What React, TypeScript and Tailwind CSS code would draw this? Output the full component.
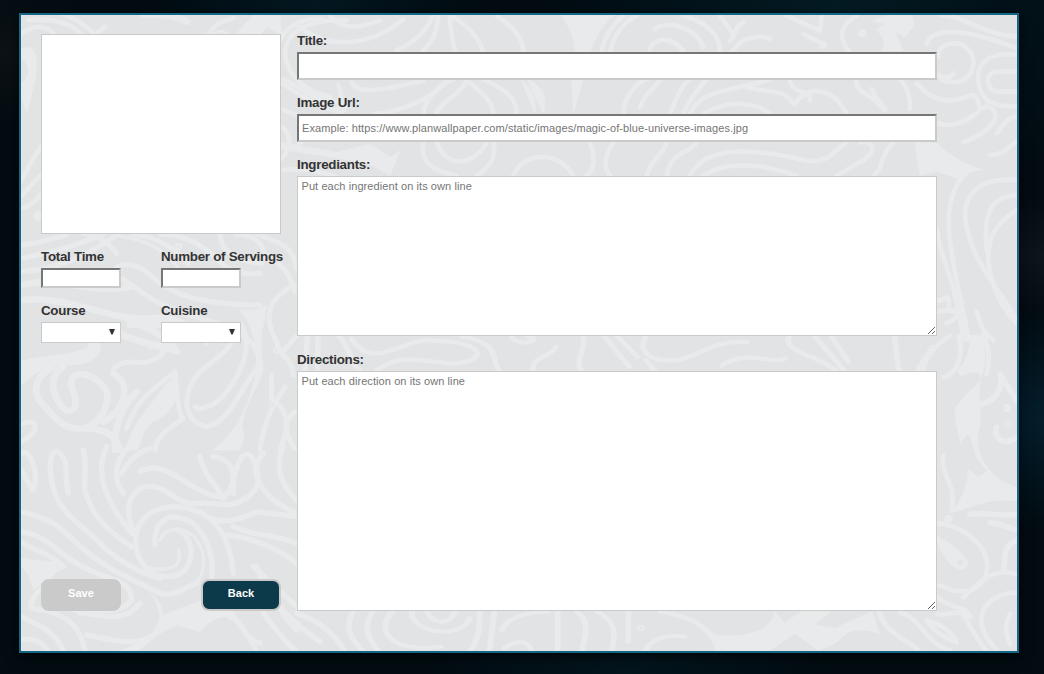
import type { ReactNode } from "react";

const label = "block h-[18px] pt-px text-[13.33px] leading-[18px] font-bold tracking-[-0.26px] text-[#333]";
const inset =
  "block rounded-none border-2 border-t-[#767676] border-l-[#767676] border-r-[#cacaca] border-b-[#cacaca] bg-white outline-none";
const area =
  "block resize rounded-none border border-[#cacaca] bg-white py-[3px] pr-1 pl-[3.5px] text-[11px] leading-[13px] tracking-[0.08px] outline-none placeholder:text-[#757575]";

function Swirls() {
  return (
    <svg className="pointer-events-none absolute inset-0 h-full w-full" viewBox="21 15 996 636" aria-hidden="true">
      <g fill="none" stroke="#e9eaec" strokeLinecap="round" strokeLinejoin="round">
        {/* upper left */}
        <g transform="scale(.33333)" strokeWidth="14">
          <path d="M60 105C100 70 140 75 165 105M85 60C170 55 220 70 250 110" />
          <path d="M185 40C230 60 260 75 285 105L315 80" />
          <path d="M430 45C510 40 540 55 562 65" strokeWidth="20" />
          <path d="M625 105C640 75 660 65 700 55" />
          <path d="M640 105C655 90 670 90 685 105" strokeWidth="8" />
          <path d="M710 100L760 45L840 40L845 105L800 80L780 105Z" fill="#e9eaec" strokeWidth="2" />
          <path d="M65 145C110 130 115 180 105 240C95 280 90 310 80 338L62 290L62 250C90 240 95 190 62 175Z" fill="#e9eaec" strokeWidth="2" />
          <path d="M62 545C85 500 105 465 124 440M62 590C90 560 105 540 124 525M62 625C90 620 110 600 124 580" />
          <circle cx="118" cy="648" r="9" fill="#e9eaec" />
          <path d="M1040 60C920 60 860 90 855 160C855 220 920 280 990 290M845 250C900 280 940 320 1010 330C1030 310 1025 280 1015 255" />
          <path d="M850 330C920 350 950 400 885 440M845 380C870 400 880 440 845 475M850 510C930 500 980 520 1044 545" />
        </g>
        {/* left, around the small fields */}
        <g transform="translate(0 225) scale(.33333)" strokeWidth="15">
          <path d="M62 60C120 55 160 40 200 30M62 100C170 80 230 60 310 28M62 140C190 130 280 80 350 30" />
          <path d="M250 25C300 35 330 55 350 85" />
          <path d="M345 30C440 45 490 70 535 130" strokeWidth="10" />
          <path d="M400 28C470 35 520 65 565 115M480 28C560 30 610 60 660 110C690 140 720 150 780 145" />
          <path d="M660 28C660 75 710 110 785 115M710 28C760 30 790 55 795 95M770 28C840 50 880 65 890 130" />
          <path d="M720 255C750 262 790 250 800 240L790 300C780 330 780 380 790 430C780 480 740 520 725 600C735 640 730 660 715 675H640C700 630 740 560 765 460C780 380 760 300 720 255Z" fill="#e9eaec" strokeWidth="3" />
          <path d="M62 410C140 385 200 400 270 365L300 345C310 390 280 420 200 420C140 420 110 440 62 480Z" fill="#e9eaec" strokeWidth="3" />
          <path d="M340 140C350 110 410 110 450 150C510 210 610 240 780 240" />
          <path d="M360 160C410 180 430 230 600 280C710 310 770 340 780 410" />
          <path d="M62 180C180 150 270 210 390 185M62 225C210 210 330 290 450 280C540 270 570 310 620 350C580 310 480 290 390 300" strokeWidth="20" />
          <path d="M380 280C440 310 500 330 530 380C480 355 430 360 370 330C320 300 280 340 270 370" strokeWidth="20" />
          <path d="M340 430C390 390 420 430 470 400C510 380 480 360 450 365" />
          <path d="M190 425C150 450 150 500 185 545C210 570 240 555 220 500C190 430 280 430 320 500C330 540 300 600 250 610C190 620 160 570 130 540C90 500 110 450 155 430" strokeWidth="20" />
          <path d="M62 600C110 570 130 620 62 650" />
          <path d="M250 610C330 610 350 640 360 675M340 445C400 480 370 560 310 590M410 500C360 550 340 620 345 675" strokeWidth="20" />
          <path d="M525 440C455 500 410 520 380 610M550 580C490 620 470 640 465 675M525 440C530 490 530 540 545 580" />
          <path d="M530 445C545 520 510 570 460 590C420 620 430 650 410 675H380C390 600 440 560 480 500Z" fill="#e9eaec" strokeWidth="2" />
          <path d="M720 300C700 370 650 400 600 440C540 510 550 590 620 605C690 590 710 510 770 430M725 300C755 350 735 430 680 500C650 540 605 560 585 545" />
          <path d="M800 90C850 120 870 150 885 200M885 180C800 220 790 280 830 350C840 400 880 400 880 450M815 450V520M855 485C820 540 790 590 780 675" />
          <path d="M815 520C880 570 860 620 840 675M885 560C850 590 850 620 885 670" />
          <circle cx="535" cy="65" r="4" /><circle cx="829" cy="377" r="3" />
          <circle cx="817" cy="540" r="7" strokeWidth="5" fill="#e2e3e4" />
        </g>
        {/* lower left */}
        <g transform="translate(0 450) scale(.33333)" strokeWidth="16">
          <path d="M62 10C85 -10 120 60 100 120C80 100 75 70 62 60M205 130C190 70 210 40 180 10C150 -15 140 60 165 130C190 200 260 235 310 290C360 335 410 365 480 385" />
          <path d="M250 0C270 80 230 100 280 180C310 235 360 265 395 290M320 -10C280 70 320 160 395 250" />
          <path d="M385 -10C340 40 340 90 370 130M365 70C385 30 420 5 450 -5" />
          <path d="M405 250C360 170 400 100 460 110C520 120 530 170 600 160C650 155 690 180 735 145" />
          <path d="M420 65C490 30 530 90 620 130C710 170 690 80 720 30C740 0 760 10 770 60C785 100 760 130 740 145" />
          <path d="M600 20C610 75 650 105 670 145M640 20C710 30 700 80 700 130" />
          <path d="M410 300C390 200 480 155 560 175C650 190 690 270 700 370M410 300C430 380 510 400 555 360C590 310 570 260 535 240" />
          <path d="M465 285C460 220 500 190 545 205C610 220 645 310 635 390" />
          <path d="M480 270C500 225 560 230 590 270C625 320 610 370 590 400M535 300C550 350 510 370 430 350" strokeWidth="10" />
          <path d="M62 185C130 200 170 220 220 270C300 350 400 390 460 420C510 450 540 420 590 400" />
          <path d="M62 245C150 260 160 300 230 340C330 400 390 380 395 450C360 500 290 470 240 490" />
          <path d="M62 275C120 310 150 310 190 350M62 330C140 350 150 330 180 352C130 380 150 400 110 430C80 470 90 480 130 480C210 500 240 530 255 605" />
          <path d="M62 335C90 330 120 345 180 352C140 370 130 400 100 420C90 380 80 360 62 350Z" fill="#e9eaec" strokeWidth="2" />
          <path d="M130 430C210 470 210 490 330 500C390 500 400 480 420 460M62 500C130 530 170 550 190 605M62 570C100 560 130 580 145 605" />
          <path d="M450 430C480 450 490 480 488 498C540 470 600 460 650 432C690 450 700 480 690 500C650 495 620 520 600 545L530 525L480 550L410 605H350C400 590 440 570 460 545L480 510C480 480 470 450 450 430Z" fill="#e9eaec" strokeWidth="3" />
          <path d="M260 555C340 570 410 590 450 560M660 440C700 510 750 550 770 605M690 500C740 520 720 560 780 580" />
          <path d="M770 350C800 430 850 500 960 575M680 255C740 260 830 290 890 340M760 350L890 470M830 400C820 460 850 500 890 540M700 230C760 260 820 250 890 280" />
          <path d="M600 185C650 230 720 210 770 185L890 200M790 10C730 70 800 150 880 185M850 -10C820 60 850 110 890 150" />
          <path d="M890 490C960 510 1010 560 1035 605M790 490C820 530 850 570 890 605" />
        </g>
        {/* top centre */}
        <g transform="translate(280 14) scale(.33333)" strokeWidth="14">
          <path d="M50 30C120 100 260 110 370 15M150 5C180 40 220 50 300 20M0 80C20 30 80 10 130 15" />
          <path d="M350 110C410 80 440 50 460 5M430 110C470 70 470 40 475 5M510 5C510 50 520 80 525 115M510 5C560 30 600 75 610 115" />
          <path d="M650 5C700 40 730 70 730 115M0 195C60 205 80 260 160 260C200 270 210 290 160 305M215 205C230 250 340 220 430 200" />
          <path d="M280 300C380 290 460 250 500 200M430 300C430 260 480 210 520 195M470 300C470 270 540 245 560 200C600 230 640 260 640 300M610 195C680 230 710 250 710 300" />
          <path d="M845 5C870 40 885 80 885 115H930C945 70 970 30 1000 5Z" fill="#e9eaec" strokeWidth="2" />
          <path d="M720 195C760 220 770 270 765 300M740 195C800 220 800 260 790 300M875 195L880 300L910 195Z" fill="#e9eaec" strokeWidth="2" />
          <path d="M965 115C970 70 1000 30 1030 5M990 115C1000 70 1020 30 1070 5M1030 300C1030 260 1060 210 1100 195" />
          <path d="M0 385L170 415L270 390L330 430L360 410L330 485L280 455L220 440L0 405Z" fill="#e9eaec" strokeWidth="2" />
          <path d="M430 385C420 450 460 470 530 485M470 385C500 470 590 450 620 385M640 385C650 430 630 460 590 485M700 485C730 410 840 410 880 485M930 385C950 440 940 470 920 485M1000 385C970 430 970 460 990 485" />
        </g>
        {/* top right */}
        <g transform="translate(640 14) scale(.33333)" strokeWidth="14">
          <path d="M45 45C90 15 170 45 190 100M30 105C45 65 100 70 130 110M130 5C200 25 240 60 240 115M270 80C290 60 270 50 240 5M310 25C280 40 290 60 275 75M275 115C310 60 370 65 390 75M440 5L540 50L545 5M490 60L550 90" />
          <path d="M650 5C590 40 600 80 630 115" />
          <path d="M700 20L735 5H820C800 30 815 50 800 65L765 55L790 110H725C745 80 725 70 710 45L735 30Z" fill="#e9eaec" strokeWidth="3" />
          <circle cx="667" cy="57" r="5" /><circle cx="548" cy="93" r="5" />
          <path d="M0 280C10 240 60 210 60 195M90 300C110 250 120 220 150 195M130 300C150 250 180 220 200 195M150 300C180 220 300 230 390 195M190 300C270 250 360 270 390 300" />
          <path d="M320 220C390 240 430 220 460 270M450 195C450 240 520 230 510 260M465 270C500 210 580 220 620 300M650 195C640 240 690 230 735 290M695 225C710 260 730 270 735 290M780 195C810 230 810 260 810 285" />
          <path d="M20 485C30 440 80 410 80 385M80 485C90 410 150 420 170 385M150 485C190 410 290 390 500 440C570 450 590 400 620 385M190 485C270 430 400 460 470 485M660 385C720 380 700 430 650 450L590 485M760 385C710 440 740 450 700 485" />
        </g>
        <g transform="translate(900 0) scale(.33333)" strokeWidth="14">
          <path d="M30 55C50 90 10 80 12 105M120 45C190 45 250 105 350 110M80 130C100 80 200 85 350 145" />
          <path d="M115 170C110 120 210 110 220 180C225 230 180 260 125 240M115 225C130 240 160 230 160 220M350 165C280 155 230 180 235 240C240 300 270 320 350 320M350 215H290C250 220 260 270 290 275H350" />
          <path d="M50 250C100 310 160 310 215 285C250 290 220 340 260 320C310 330 290 390 190 427M115 370C160 385 210 360 240 330M350 350C320 350 310 380 290 400M350 425C320 445 310 465 270 465" />
          <path d="M45 425L110 430C150 470 200 495 250 510C210 510 190 530 190 540L110 515L60 525Z" fill="#e9eaec" strokeWidth="2" />
          <path d="M190 525C100 640 170 800 205 1020M350 540C230 530 180 590 200 680C220 790 300 870 350 960M350 585C270 590 250 640 260 750M350 630C290 670 260 710 265 790C275 850 300 920 350 970" />
          <path d="M112 690C120 780 150 800 165 890C180 940 185 980 190 1020M112 900C140 910 150 860 145 930M112 935C180 920 190 950 140 970M230 935C240 970 250 1000 280 1020" />
        </g>
        {/* lower right */}
        <g transform="translate(900 334) scale(.33333)" strokeWidth="14">
          <path d="M70 105C80 60 110 30 150 5M175 5C195 60 170 120 130 130M250 0C270 50 270 80 260 120" />
          <path d="M210 5H250C250 40 265 90 240 130C245 110 215 110 200 120C180 135 160 110 190 90C205 60 215 30 210 5Z" fill="#e9eaec" strokeWidth="3" />
          <path d="M240 140C220 170 180 190 165 230C165 270 180 300 182 330C195 300 210 290 215 320C225 350 225 380 265 410L235 430L205 405C205 430 195 490 155 535C220 520 260 490 350 500V460C270 440 220 360 235 290C250 230 230 210 240 140Z" fill="#e9eaec" strokeWidth="3" />
          <path d="M245 210C290 200 310 160 300 120L350 200M350 310C310 340 280 310 290 280" strokeWidth="17" />
          <circle cx="321" cy="222" r="5" /><circle cx="324" cy="270" r="3" />
          <path d="M130 365C120 430 170 440 155 530M112 568C170 570 250 620 260 680C270 730 230 780 180 770C160 780 130 750 112 755" />
          <path d="M230 500C220 450 270 450 300 450M210 540C280 535 310 550 350 540M270 565C320 570 330 590 350 585M350 620C300 640 320 680 310 710" strokeWidth="17" />
          <path d="M112 610C160 630 210 680 200 695C170 725 130 670 112 620Z" fill="#e9eaec" strokeWidth="5" />
          <circle cx="180" cy="686" r="9" fill="#e2e3e4" strokeWidth="2" />
          <circle cx="145" cy="555" r="6" fill="#e2e3e4" />
          <path d="M190 790C240 740 280 700 350 720M350 775C260 780 220 840 260 910L290 950M330 840C310 880 320 900 330 930M112 790C140 820 210 820 210 850C170 820 140 850 112 840M0 835C60 850 80 930 150 950M80 860C130 870 160 900 170 925C130 910 100 890 80 860M180 830C210 870 230 920 260 950" />
        </g>
        {/* band between the text areas */}
        <g transform="translate(280 332) scale(.42092 .33333)" strokeWidth="13">
          <path d="M0 60C20 50 30 20 40 12M65 15L60 115M90 15V115M140 12C180 70 160 90 190 115M170 20C220 120 290 20 360 25C500 30 490 90 410 95C340 90 290 60 230 115M430 12C530 35 500 85 520 115M550 15C570 50 630 20 590 12M655 45C640 80 600 70 600 115" />
          <path d="M720 12C730 50 700 80 715 115M770 12L830 105M800 12L850 75M870 12C850 50 870 90 940 85C1010 70 1020 25 1110 30M870 85L890 115M1050 100C1110 50 1170 100 1200 80M1210 12C1190 60 1280 70 1320 115M1270 12L1340 115M1310 12L1350 90M1460 15L1470 115M1550 45L1515 115" />
        </g>
        {/* bottom edge */}
        <g transform="translate(280 560) scale(.48724 .33333)" strokeWidth="12">
          <path d="M150 155C130 210 150 240 170 272M190 155C170 200 180 230 200 272M230 155C190 220 240 280 330 260M270 155C270 220 370 240 390 175M300 155C320 200 350 190 360 155M390 272C410 240 410 190 410 155M430 272L440 155M455 210C470 170 510 155 550 155M460 265C480 240 510 240 515 270" />
          <path d="M570 155V272M610 155C640 190 625 230 620 272M650 155C690 180 690 230 680 272M715 155V245M750 272C760 240 790 220 830 230M780 155C860 170 890 220 900 272" />
          <path d="M1015 155C1010 220 940 240 880 222L910 272H1005L1057 220L1105 272L1145 245C1160 210 1190 200 1230 220L1215 155L1140 205L1095 195L1130 155H1070L1035 190Z" fill="#e9eaec" strokeWidth="2" />
          <path d="M1230 155C1240 220 1290 240 1310 272" />
          <circle cx="740" cy="204" r="3" />
        </g>
      </g>
    </svg>
  );
}

function Field({ name, children }: { name: string; children: ReactNode }) {
  return (
    <label className="block">
      <span className={label}>{name}</span>
      <span className="mt-[3px] block">{children}</span>
    </label>
  );
}

function Choice() {
  return (
    <span className="relative block h-[21px] w-20">
      <select className="block h-[21px] w-20 appearance-none border border-[#cacaca] bg-white outline-none" />
      <svg className="pointer-events-none absolute top-[7px] right-[6px] h-[6px] w-[6px]" viewBox="0 0 6 6">
        <path d="M0 0H6L3.6 5.5H2.4Z" fill="#333" />
      </svg>
    </span>
  );
}

export default function App() {
  return (
    <main className="h-[674px] w-[1044px] overflow-hidden bg-[#020c12] bg-[radial-gradient(ellipse_at_100%_62%,#041d2b_0%,transparent_18%),radial-gradient(ellipse_at_100%_38%,#0c151c_0%,transparent_10%),radial-gradient(ellipse_at_0%_8%,#0c1215_0%,transparent_8%),radial-gradient(ellipse_at_80%_0%,#041b24_0%,transparent_24%),radial-gradient(ellipse_at_30%_0%,#041821_0%,transparent_15%),radial-gradient(ellipse_at_60%_100%,#03151d_0%,transparent_22%)] pt-[13px] pl-[19px] font-['Liberation_Sans',Arial,sans-serif]">
      <section className="relative h-[640px] w-[1000px] border-2 border-[#156684] bg-[#e2e3e4] shadow-[0_4px_12px_rgba(0,0,0,0.65)]">
        <Swirls />
        <form className="relative flex gap-4 pt-[19px] pl-5" onSubmit={(e) => e.preventDefault()}>
          <div className="flex h-[577px] w-60 flex-col">
            <div className="h-[200px] shrink-0 border border-[#cacaca] bg-white" />
            <div className="mt-[13px] grid grid-cols-[120px_120px] gap-y-[13px] whitespace-nowrap">
              <Field name="Total Time">
                <input className={`${inset} h-5 w-20`} />
              </Field>
              <Field name="Number of Servings">
                <input className={`${inset} h-5 w-20`} />
              </Field>
              <Field name="Course"><Choice /></Field>
              <Field name="Cuisine"><Choice /></Field>
            </div>
            <div className="mt-auto flex justify-between text-[11px] leading-[13px] font-bold tracking-[0.1px] text-white">
              <button className="h-8 w-20 rounded-lg border-2 border-[#cacaca] bg-[#cacaca] pb-[3px]" disabled>Save</button>
              <button className="h-8 w-20 rounded-lg border-2 border-[#cacaca] bg-[#0d3a4b] pb-[3px]">Back</button>
            </div>
          </div>
          <div className="-mt-[3px] flex w-[640px] flex-col">
            <Field name="Title:">
              <input className={`${inset} h-7 w-full px-[3px] text-[11px]`} />
            </Field>
            <div className="mt-[13px]">
              <Field name="Image Url:">
                <input
                  className={`${inset} h-7 w-full px-[3px] text-[11px] tracking-[0.09px] placeholder:text-[#757575]`}
                  placeholder="Example: https://www.planwallpaper.com/static/images/magic-of-blue-universe-images.jpg"
                />
              </Field>
            </div>
            <div className="mt-[13px]">
              <Field name="Ingrediants:">
                <textarea className={`${area} h-40 w-full`} placeholder="Put each ingredient on its own line" />
              </Field>
            </div>
            <div className="mt-[14px]">
              <Field name="Directions:">
                <textarea className={`${area} h-60 w-full`} placeholder="Put each direction on its own line" />
              </Field>
            </div>
          </div>
        </form>
      </section>
    </main>
  );
}
